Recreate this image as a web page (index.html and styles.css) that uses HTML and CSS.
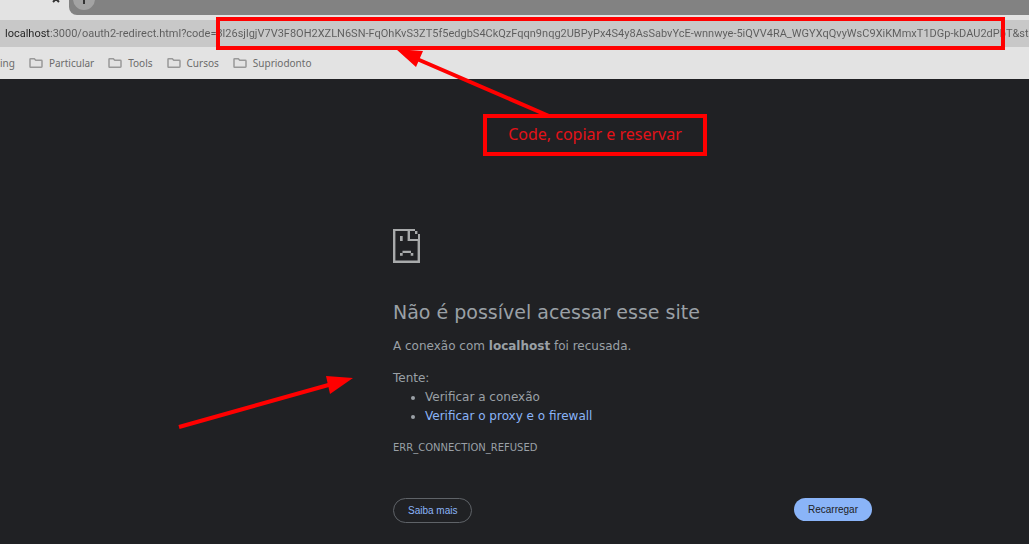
FILE: index.html
```
<!DOCTYPE html>
<html lang="pt-BR">
<head>
<meta charset="utf-8">
<title>localhost</title>
<link rel="stylesheet" href="styles.css">
</head>
<body>
<header class="browser">
  <div class="tabs">
    <div class="tab">
      <button class="tab-close" aria-label="Fechar guia"><svg width="8" height="8" viewBox="0 0 8 8"><path d="M1 1l6 6M7 1l-6 6"/></svg></button>
    </div>
    <div class="strip">
      <button class="new-tab" aria-label="Nova guia"><svg width="10" height="10" viewBox="0 0 10 10"><path d="M5 0v10M0 5h10"/></svg></button>
    </div>
  </div>
  <input class="address" type="text" aria-label="Endereço" value="localhost:3000/oauth2-redirect.html?code=3l26sjlgjV7V3F8OH2XZLN6SN-FqOhKvS3ZT5f5edgbS4CkQzFqqn9nqg2UBPyPx4S4y8AsSabvYcE-wnnwye-5iQVV4RA_WGYXqQvyWsC9XiKMmxT1DGp-kDAU2dPbT&amp;stat.">
  <nav class="bookmarks">
    <a href="#">ing</a>
    <a href="#"><svg width="14" height="12" viewBox="0 0 14 12"><path d="M1.700 1.700h3.600l1.500 1.600h5.500q.7 0 .7.7v5.600q0 .7-.7.7H1.700Q1 10.300 1 9.600V2.400q0-.7.7-.7z"/></svg>Particular</a>
    <a href="#"><svg width="14" height="12" viewBox="0 0 14 12"><path d="M1.700 1.700h3.600l1.500 1.600h5.500q.7 0 .7.7v5.600q0 .7-.7.7H1.700Q1 10.300 1 9.600V2.400q0-.7.7-.7z"/></svg>Tools</a>
    <a href="#"><svg width="14" height="12" viewBox="0 0 14 12"><path d="M1.700 1.700h3.600l1.500 1.600h5.500q.7 0 .7.7v5.600q0 .7-.7.7H1.700Q1 10.300 1 9.600V2.400q0-.7.7-.7z"/></svg>Cursos</a>
    <a href="#"><svg width="14" height="12" viewBox="0 0 14 12"><path d="M1.700 1.700h3.600l1.500 1.600h5.500q.7 0 .7.7v5.600q0 .7-.7.7H1.700Q1 10.300 1 9.600V2.400q0-.7.7-.7z"/></svg>Supriodonto</a>
  </nav>
</header>
<main class="page">
  <section class="error">
    <svg class="sad" width="27" height="34" viewBox="0 0 27 34"><path d="M0 0h22v2H2.400v29.600h22.200V12H14.600V2h2.400v8h8V5h2v29H0zM22 2h2.400v3H22zM7 7h2.700v5H7zM9.500 21.700h8.500V24H9.500zM7 24h2.700v2.700H7zM17.700 24h2.600v2.700h-2.600z"/></svg>
    <h1>Não é possível acessar esse site</h1>
    <p>A conexão com <strong>localhost</strong> foi recusada.</p>
    <p class="try">Tente:</p>
    <ul>
      <li>Verificar a conexão</li>
      <li><a href="#">Verificar o proxy e o firewall</a></li>
    </ul>
    <p class="code">ERR_CONNECTION_REFUSED</p>
    <div class="actions">
      <button class="more">Saiba mais</button>
      <button class="reload">Recarregar</button>
    </div>
  </section>
</main>
<div class="url-frame"></div>
<div class="note">Code, copiar e reservar</div>
<svg class="arrows" width="720" height="440" viewBox="0 0 720 440">
  <path class="shaft" d="M549 116L417 59M179 427L332 384"/>
  <path class="head" d="M396 49L423 51L416 67zM353 378L326 376L330 394z"/>
</svg>
</body>
</html>
```
FILE: styles.css
```
* { box-sizing: border-box; }
body {
  margin: 0;
  position: relative;
  min-height: 100vh;
  overflow: hidden;
  background: #202124;
  color: #9aa0a6;
  font: 12px/19px "DejaVu Sans", sans-serif;
}
button { font: inherit; cursor: pointer; }
a { text-decoration: none; }
p { margin: 0; }

.browser {
  background: #e3e3e3;
  color: #6b6b6b;
  font: 10px/16px "Noto Sans", sans-serif;
}
.tabs { display: flex; height: 20px; padding-bottom: 5px; }
.tab { display: flex; justify-content: flex-end; width: 69px; padding-right: 9px; }
.strip {
  flex: 1;
  padding-left: 4px;
  overflow: hidden;
  background: #828282;
  border-bottom-left-radius: 8px;
}
.tab-close { width: 8px; height: 8px; margin-top: -5px; padding: 0; border: 0; background: none; }
.tab-close svg, .new-tab svg { display: block; fill: none; stroke: #333; stroke-width: 2; }
.new-tab {
  display: grid;
  place-items: center;
  width: 22px;
  height: 22px;
  margin-top: -12px;
  padding: 0;
  border: 0;
  border-radius: 50%;
  background: #a3a3a3;
}
.address {
  display: block;
  width: 100%;
  height: 27px;
  padding: 0 0 0 5px;
  border: 0;
  outline: 0;
  background: linear-gradient(90deg, #222 50px, #5c5c5c 50px) text, #c8c8c8;
  color: transparent;
  font: 11px/27px Roboto, sans-serif;
}
.bookmarks { display: flex; gap: 14px; height: 32px; padding-bottom: 1px; align-items: center; }
.bookmarks a { display: flex; align-items: center; gap: 6px; color: inherit; }
.bookmarks svg { fill: none; stroke: #999; stroke-width: 1.500; }

.page { padding: 150px 24px 20px 393px; }
.error { max-width: 479px; }
.sad { display: block; fill: #a8aaab; }
h1 { margin: 37px 0 13px; font-size: 19px; font-weight: 400; line-height: 24px; }
.try { margin-top: 13px; }
ul { margin: 0; padding-left: 32px; }
.error a { color: #8ab4f8; }
.code { margin-top: 12px; font-size: 10px; }
.actions {
  display: flex;
  justify-content: space-between;
  align-items: flex-start;
  margin-top: 41px;
  font: 10px/13px "Liberation Sans", sans-serif;
}
.actions button { padding: 5px 14px; border: 0; border-radius: 16px; }
.actions .more { border: 1px solid #5f6368; background: none; color: #8ab4f8; }
.actions .reload { background: #8ab4f8; color: #202124; }

.url-frame {
  position: absolute;
  left: 216px;
  top: 17px;
  width: 789px;
  height: 33px;
  border: 4px solid #f00;
  pointer-events: none;
}
.note {
  position: absolute;
  left: 483px;
  top: 114px;
  width: 224px;
  height: 42px;
  border: 4px solid #f00;
  color: #e31218;
  font: 16px/32px "Noto Sans", sans-serif;
  text-align: center;
}
.arrows { position: absolute; left: 0; top: 0; pointer-events: none; }
.shaft { fill: none; stroke: #f00; stroke-width: 4; }
.head { fill: #f00; }
```
